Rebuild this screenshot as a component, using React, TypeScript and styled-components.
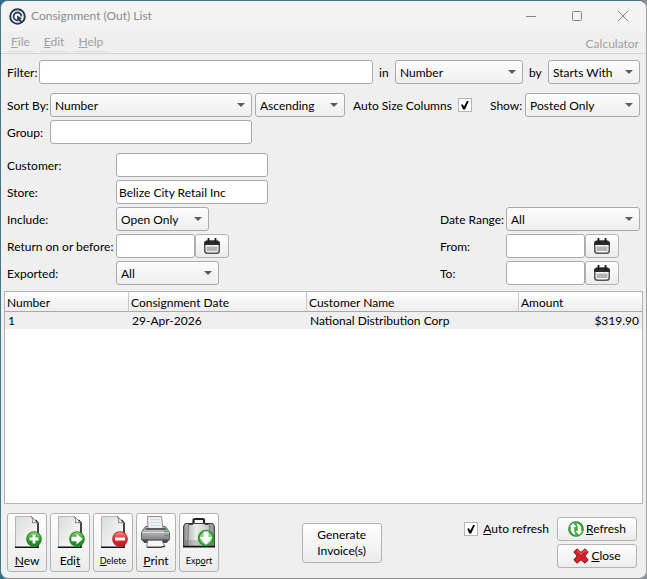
import React, { ReactNode, useState } from "react";
import styled, { createGlobalStyle, css } from "styled-components";

const GlobalStyle = createGlobalStyle`
  *, *::before, *::after { box-sizing: border-box; }
  body { margin: 0; background: linear-gradient(90deg, #2f6f86 0 8%, #8f9499 8%); }
  body, button, input, select, table {
    font-family: Lato, "Open Sans", sans-serif;
    font-size: 12px;
    line-height: 16px;
    color: #000;
  }
`;

const Window = styled.div`
  display: flex;
  flex-direction: column;
  min-height: 100vh;
  border: 1px solid #4a7386;
  border-right-color: #a0a0a0;
  border-bottom-color: #8a8f93;
  border-radius: 8px;
  background: #efefef;
  overflow: hidden;
`;

const TitleBar = styled.header`
  display: flex;
  align-items: center;
  height: 30px;
  padding-left: 8px;
  background: #f3f3f3;
  color: #8c8c8c;
`;

const Title = styled.h1`
  flex: 1;
  margin: 0 0 0 5px;
  font-size: 12px;
  font-weight: 400;
`;

const CaptionButton = styled.button`
  display: grid;
  place-items: center;
  width: 46px;
  height: 30px;
  padding: 0;
  border: 0;
  background: none;
  color: #858585;
`;

const MenuBar = styled.nav`
  display: flex;
  align-items: flex-start;
  gap: 6px;
  height: 23px;
  padding: 0 6px;
  border-bottom: 1px solid #d5d5d5;
`;

const MenuItem = styled.button<{ $end?: boolean }>`
  height: 21px;
  padding: 2px 4px 0;
  border: 0;
  border-bottom: 1px solid #e0e0e0;
  background: none;
  color: #a0a0a0;
  ${(p) => p.$end && css`
    margin: 3px -3px 0 auto;
    height: 18px;
    border-bottom: 0;
  `}
`;

const Filters = styled.section`
  display: flex;
  flex-direction: column;
  padding: 6px 6px 0 6px;
`;

const Line = styled.div<{ $top?: number }>`
  display: flex;
  align-items: center;
  height: 24px;
  margin-top: ${(p) => p.$top ?? 3}px;
`;

const Label = styled.label<{ $width?: number; $gap?: number }>`
  flex: none;
  width: ${(p) => (p.$width ? `${p.$width}px` : "auto")};
  margin: 0 ${(p) => p.$gap ?? 0}px;
  padding-top: 1px;
  white-space: nowrap;
`;

const field = css`
  height: 24px;
  border: 1px solid #aaa;
  border-radius: 3px;
`;

const TextInput = styled.input<{ $width?: number }>`
  ${field}
  min-width: 0;
  padding: 0 2px;
  background: #fff;
  ${(p) => (p.$width ? `width: ${p.$width}px;` : "flex: 1;")}
`;

const SelectBox = styled.span<{ $width?: number; $gap?: number }>`
  position: relative;
  display: flex;
  margin-left: ${(p) => p.$gap ?? 0}px;
  ${(p) => (p.$width ? `width: ${p.$width}px;` : "flex: 1;")}

  &::after {
    content: "";
    position: absolute;
    right: 7px;
    top: 10px;
    border: 4px solid transparent;
    border-top-color: #5c5c5c;
    border-bottom: 0;
    pointer-events: none;
  }

  select {
    ${field}
    width: 100%;
    padding: 1px 16px 0 4px;
    appearance: none;
    background: linear-gradient(#fdfdfd, #eee);
  }
`;

const buttonFace = css`
  border: 1px solid #b2b2b2;
  border-radius: 3px;
  background: linear-gradient(#fefefe, #ececec);
`;

const DateButton = styled.button`
  ${buttonFace}
  display: grid;
  place-items: center;
  width: 34px;
  height: 24px;
  padding: 0;
`;

const CheckBox = styled.input<{ $gap?: number }>`
  appearance: none;
  display: grid;
  place-items: center;
  flex: none;
  width: 14px;
  height: 14px;
  margin: 0 ${(p) => p.$gap ?? 0}px;
  border: 1px solid #b4b4b4;
  background: #fff;

  &:checked::before {
    content: "";
    width: 8px;
    height: 9px;
    background: #000;
    clip-path: polygon(0 48%, 20% 42%, 38% 66%, 78% 0, 100% 0, 50% 100%, 26% 100%);
  }
`;

const Criteria = styled.div`
  display: flex;
  justify-content: space-between;
  align-items: flex-end;
  padding-top: 6px;
`;

const Column = styled.div<{ $width: number }>`
  width: ${(p) => p.$width}px;
`;

const ListPane = styled.main`
  flex: 1;
  min-height: 120px;
  margin: 6px 3px 0;
  border: 1px solid #b4b4b4;
  background: #fff;
`;

const Grid = styled.table`
  width: 100%;
  table-layout: fixed;
  border-collapse: separate;
  border-spacing: 0;
`;

const HeadCell = styled.th<{ $width?: number }>`
  width: ${(p) => (p.$width ? `${p.$width}px` : "auto")};
  height: 20px;
  padding: 2px 2px 0;
  border-right: 1px solid #c8c8c8;
  border-bottom: 1px solid #aaa;
  background: linear-gradient(#fff, #ededed);
  font-weight: 400;
  text-align: left;
  &:last-child { border-right: 0; }
`;

const Cell = styled.td<{ $right?: boolean }>`
  height: 17px;
  padding: 1px 3px 0;
  background: #efefef;
  text-align: ${(p) => (p.$right ? "right" : "left")};
`;

const Footer = styled.footer`
  display: flex;
  justify-content: space-between;
  align-items: center;
  padding: 9px 9px 6px 6px;
`;

const Tools = styled.div`
  display: flex;
  gap: 3px;
`;

const ToolButton = styled.button<{ $small?: boolean }>`
  ${buttonFace}
  display: flex;
  flex-direction: column;
  align-items: center;
  gap: 5px;
  width: 40px;
  height: 59px;
  padding: 2px 0;
  font-size: ${(p) => (p.$small ? 9 : 12)}px;
  svg { flex: none; }
`;

const GenerateButton = styled.button`
  ${buttonFace}
  width: 80px;
  height: 40px;
  padding: 0;
`;

const Actions = styled.div`
  display: flex;
  align-items: flex-start;
  gap: 8px;
`;

const AutoRefresh = styled.label`
  display: flex;
  align-items: center;
  gap: 5px;
  height: 24px;
`;

const ActionStack = styled.div`
  display: flex;
  flex-direction: column;
  gap: 3px;
`;

const ActionButton = styled.button`
  ${buttonFace}
  display: flex;
  align-items: center;
  justify-content: center;
  gap: 2px;
  width: 80px;
  height: 24px;
  padding: 0;
`;

function Select({ id, value, width, gap, label }: { id: string; value: string; width?: number; gap?: number; label?: string }) {
  return (
    <SelectBox $width={width} $gap={gap}>
      <select id={id} aria-label={label} defaultValue={value}>
        <option>{value}</option>
      </select>
    </SelectBox>
  );
}

function CalendarIcon() {
  return (
    <svg width="16" height="16" viewBox="0 0 16 16">
      <rect x="0" y="2.500" width="16" height="13.500" rx="3.500" fill="#555" />
      <path d="M0 7V6a3.500 3.500 0 0 1 3.500-3.500h9A3.500 3.500 0 0 1 16 6v1z" fill="#2a2a2a" />
      <path d="M1.500 7h13v5a2.500 2.500 0 0 1-2.500 2.500H4A2.500 2.500 0 0 1 1.500 12z" fill="#f4f4f4" />
      <rect x="2.500" y="8.500" width="11" height="4.500" fill="#b5b5b5" />
      <path d="M4.500 0v5M11.500 0v5" stroke="#1c1c1c" strokeWidth="1.800" />
    </svg>
  );
}

function DateField({ id, label }: { id: string; label: string }) {
  return (
    <>
      <TextInput id={id} $width={79} />
      <DateButton type="button" aria-label={`${label} calendar`}><CalendarIcon /></DateButton>
    </>
  );
}

function LogoIcon() {
  return (
    <svg width="17" height="17" viewBox="0 0 17 17">
      <circle cx="8.500" cy="8.500" r="7.300" fill="#f8f8f8" stroke="#263c54" strokeWidth="2" />
      <path d="M8.500 12.300a3.900 3.900 0 1 1 3.900-3.900" fill="none" stroke="#263c54" strokeWidth="1.800" />
      <path d="M8 7.500l5 2.700-1.800.9 2 2.400-1.600 1.300-2-2.400-1.200 1.500z" fill="#263c54" />
    </svg>
  );
}

function DocumentIcon({ badge }: { badge: "plus" | "arrow" | "minus" }) {
  const red = badge === "minus";
  const id = `badge-${badge}`;
  return (
    <svg width="32" height="32" viewBox="0 0 32 32">
      <defs>
        <linearGradient id={id} x1="0" y1="0" x2="0" y2="1">
          <stop offset="0" stopColor={red ? "#f58a8a" : "#7ed267"} />
          <stop offset=".5" stopColor={red ? "#dc2f36" : "#2f9d2c"} />
          <stop offset="1" stopColor={red ? "#c4161f" : "#1b8420"} />
        </linearGradient>
        <linearGradient id={`${id}-page`} x1="0" y1="0" x2="1" y2="1">
          <stop offset="0" stopColor="#d9dcdb" />
          <stop offset=".6" stopColor="#eff0ef" />
          <stop offset="1" stopColor="#fff" />
        </linearGradient>
      </defs>
      <path d="M4.500.5h16l6.500 7v24H4.500z" fill={`url(#${id}-page)`} stroke="#b5b5b5" />
      <path d="M4 31.300h23V7l-2.500-3" fill="none" stroke="#111" strokeWidth="1.500" />
      <path d="M20.500.5l6.500 7c-2-1-4-1.300-5.500-.5.500-2 0-4.500-1-6.500z" fill="#f8f8f8" stroke="#666" strokeWidth=".8" />
      <circle cx="23" cy="23" r="7.800" fill={red ? "#b51b23" : "#267a25"} />
      <circle cx="23" cy="23" r="7" fill={`url(#${id})`} />
      {badge === "plus" && <path d="M23 18.500v9M18.500 23h9" stroke="#fff" strokeWidth="2.800" />}
      {badge === "minus" && <path d="M18 23h10" stroke="#fff" strokeWidth="3" />}
      {badge === "arrow" && <path d="M17.500 20.700h5v-3.200l6.300 5.500-6.300 5.500v-3.200h-5z" fill="#fff" />}
    </svg>
  );
}

function PrinterIcon() {
  return (
    <svg width="32" height="32" viewBox="0 0 32 32">
      <defs>
        <linearGradient id="printer" x1="0" y1="0" x2="0" y2="1">
          <stop offset="0" stopColor="#c6c6c8" />
          <stop offset=".5" stopColor="#a6a6aa" />
          <stop offset="1" stopColor="#747478" />
        </linearGradient>
      </defs>
      <path d="M5.500 10.500h20l4 6v7l-3 2.500h-22l-3-2.500v-7z" fill="url(#printer)" stroke="#5c5c5e" />
      <path d="M7.500.5h14l1.500 12H8z" fill="#edf0f2" stroke="#8e8e90" />
      <path d="M10 3.500h9.500M10 6.500h10M10 9.500h10.500" stroke="#d3d8dc" />
      <path d="M5.500 13h20.500" stroke="#444" strokeWidth="1.300" />
      <path d="M2 16.500h27" stroke="#dadadc" />
      <path d="M24 15.500h4" stroke="#35c840" strokeWidth="1.600" />
      <path d="M24.500 19.500h4" stroke="#3e87dc" strokeWidth="1.600" />
      <path d="M1.500 23.500h28l-3 3.500H4.500z" fill="#47474a" />
      <path d="M8 24.500h14l3 6.500H6.500z" fill="#f5f7f8" stroke="#888" />
      <path d="M7 31.300h14l4-1.500" fill="none" stroke="#222" />
    </svg>
  );
}

function SuitcaseIcon() {
  return (
    <svg width="32" height="32" viewBox="0 0 32 32">
      <defs>
        <linearGradient id="case" x1="0" y1="0" x2="1" y2="0">
          <stop offset="0" stopColor="#7c7c7c" />
          <stop offset=".12" stopColor="#b4b4b4" />
          <stop offset=".4" stopColor="#ececec" />
          <stop offset=".75" stopColor="#cdcdcd" />
          <stop offset="1" stopColor="#808080" />
        </linearGradient>
      </defs>
      <path d="M10.500 8V4.200Q10.500 3 12 3h7.500Q21 3 21 4.200V8" fill="none" stroke="#222" strokeWidth="2.200" />
      <path d="M2 7.500h28l1.500 3v20H.5v-20z" fill="url(#case)" stroke="#444" />
      <path d="M1 24h30v6.500H1z" fill="#555" opacity=".25" />
      <path d="M5.500 8L4.500 30M26.500 8l1 22" stroke="#777" />
      <path d="M6 8h4M21.500 8h4" stroke="#222" strokeWidth="1.600" />
      <path d="M0 30.700h32" stroke="#111" strokeWidth="1.800" />
      <circle cx="23" cy="22" r="8.200" fill="#2c9c30" />
      <circle cx="23" cy="22" r="6.200" fill="#8ccf85" />
      <path d="M20.500 15.500h5v5.500h4L23 29l-6.500-8h4z" fill="#fff" />
    </svg>
  );
}

function RefreshIcon() {
  return (
    <svg width="16" height="16" viewBox="0 0 16 16">
      <circle cx="8" cy="8" r="7.800" fill="#23872a" />
      <circle cx="8" cy="8" r="6.900" fill="#43ae3d" />
      <path d="M7.500 13.800A6 6 0 0 1 3 6H1.500L5 2l3.500 4H6.200Q5.500 10 7.500 13.800z" fill="#fff" />
      <path d="M8.500 2.200A6 6 0 0 1 13 10h1.500L11 14l-3.500-4h2.300Q10.500 6 8.500 2.200z" fill="#fff" />
    </svg>
  );
}

function CloseIcon() {
  return (
    <svg width="16" height="16" viewBox="0 0 16 16">
      <path d="M4 .8L8 4.500 12 .8 15.200 4 11.800 8l3.400 4-3.200 3.200-4-3.400-4 3.400L.8 12l3.400-4L.8 4z" fill="#d3222b" stroke="#7d0e14" />
      <path d="M4 2.200L8 6l4-3.800L13.800 4" fill="none" stroke="#ee7378" />
    </svg>
  );
}

function Tool({ icon, small, children }: { icon: ReactNode; small?: boolean; children: ReactNode }) {
  return (
    <ToolButton type="button" $small={small}>
      {icon}
      <span>{children}</span>
    </ToolButton>
  );
}

export default function App() {
  const [autoSize, setAutoSize] = useState(true);
  const [autoRefresh, setAutoRefresh] = useState(true);

  return (
    <>
      <GlobalStyle />
      <Window>
        <TitleBar>
          <LogoIcon />
          <Title>Consignment (Out) List</Title>
          <CaptionButton type="button" aria-label="Minimize">
            <svg width="10" height="10" viewBox="0 0 10 10"><path d="M0 5.500h10" stroke="currentColor" /></svg>
          </CaptionButton>
          <CaptionButton type="button" aria-label="Maximize">
            <svg width="10" height="10" viewBox="0 0 10 10"><rect x=".5" y=".5" width="9" height="9" rx="1" fill="none" stroke="currentColor" /></svg>
          </CaptionButton>
          <CaptionButton type="button" aria-label="Close window">
            <svg width="10" height="10" viewBox="0 0 10 10"><path d="M0 0l10 10M10 0L0 10" stroke="currentColor" /></svg>
          </CaptionButton>
        </TitleBar>
        <MenuBar>
          <MenuItem type="button"><u>F</u>ile</MenuItem>
          <MenuItem type="button"><u>E</u>dit</MenuItem>
          <MenuItem type="button"><u>H</u>elp</MenuItem>
          <MenuItem type="button" $end>Calculator</MenuItem>
        </MenuBar>

        <Filters>
          <Line $top={0}>
            <Label htmlFor="filter" $width={32}>Filter:</Label>
            <TextInput id="filter" />
            <Label htmlFor="field" $gap={6} $width={10}>in</Label>
            <Select id="field" value="Number" width={128} />
            <Label htmlFor="match" $gap={6} $width={13}>by</Label>
            <Select id="match" value="Starts With" width={92} />
          </Line>
          <Line $top={9}>
            <Label htmlFor="sort" $width={43}>Sort By:</Label>
            <Select id="sort" value="Number" />
            <Select id="direction" label="Sort direction" value="Ascending" width={90} gap={3} />
            <Label htmlFor="autosize" $gap={8} $width={97}>Auto Size Columns</Label>
            <CheckBox id="autosize" type="checkbox" checked={autoSize} onChange={(e) => setAutoSize(e.target.checked)} />
            <Label htmlFor="show" $gap={18} $width={17}>Show:</Label>
            <Select id="show" value="Posted Only" width={115} />
          </Line>
          <Line>
            <Label htmlFor="group" $width={43}>Group:</Label>
            <TextInput id="group" $width={202} />
          </Line>

          <Criteria>
            <Column $width={262}>
              <Line>
                <Label htmlFor="customer" $width={109}>Customer:</Label>
                <TextInput id="customer" $width={152} />
              </Line>
              <Line>
                <Label htmlFor="store" $width={109}>Store:</Label>
                <TextInput id="store" $width={152} defaultValue="Belize City Retail Inc" />
              </Line>
              <Line>
                <Label htmlFor="include" $width={109}>Include:</Label>
                <Select id="include" value="Open Only" width={93} />
              </Line>
              <Line>
                <Label htmlFor="return" $width={109}>Return on or before:</Label>
                <DateField id="return" label="Return" />
              </Line>
              <Line>
                <Label htmlFor="exported" $width={109}>Exported:</Label>
                <Select id="exported" value="All" width={103} />
              </Line>
            </Column>
            <Column $width={200}>
              <Line>
                <Label htmlFor="range" $width={66}>Date Range:</Label>
                <Select id="range" value="All" width={134} />
              </Line>
              <Line>
                <Label htmlFor="from" $width={66}>From:</Label>
                <DateField id="from" label="From" />
              </Line>
              <Line>
                <Label htmlFor="to" $width={66}>To:</Label>
                <DateField id="to" label="To" />
              </Line>
            </Column>
          </Criteria>
        </Filters>

        <ListPane>
          <Grid>
            <thead>
              <tr>
                <HeadCell $width={124}>Number</HeadCell>
                <HeadCell $width={178}>Consignment Date</HeadCell>
                <HeadCell $width={212}>Customer Name</HeadCell>
                <HeadCell>Amount</HeadCell>
              </tr>
            </thead>
            <tbody>
              <tr>
                <Cell>1</Cell>
                <Cell>29-Apr-2026</Cell>
                <Cell>National Distribution Corp</Cell>
                <Cell $right>$319.90</Cell>
              </tr>
            </tbody>
          </Grid>
        </ListPane>

        <Footer>
          <Tools>
            <Tool icon={<DocumentIcon badge="plus" />}><u>N</u>ew</Tool>
            <Tool icon={<DocumentIcon badge="arrow" />}>Edi<u>t</u></Tool>
            <Tool icon={<DocumentIcon badge="minus" />} small><u>D</u>elete</Tool>
            <Tool icon={<PrinterIcon />}><u>P</u>rint</Tool>
            <Tool icon={<SuitcaseIcon />} small>Exp<u>o</u>rt</Tool>
          </Tools>
          <GenerateButton type="button">Generate<br />Invoice(s)</GenerateButton>
          <Actions>
            <AutoRefresh>
              <CheckBox type="checkbox" checked={autoRefresh} onChange={(e) => setAutoRefresh(e.target.checked)} />
              <span><u>A</u>uto refresh</span>
            </AutoRefresh>
            <ActionStack>
              <ActionButton type="button"><RefreshIcon /><span><u>R</u>efresh</span></ActionButton>
              <ActionButton type="button"><CloseIcon /><span><u>C</u>lose</span></ActionButton>
            </ActionStack>
          </Actions>
        </Footer>
      </Window>
    </>
  );
}
